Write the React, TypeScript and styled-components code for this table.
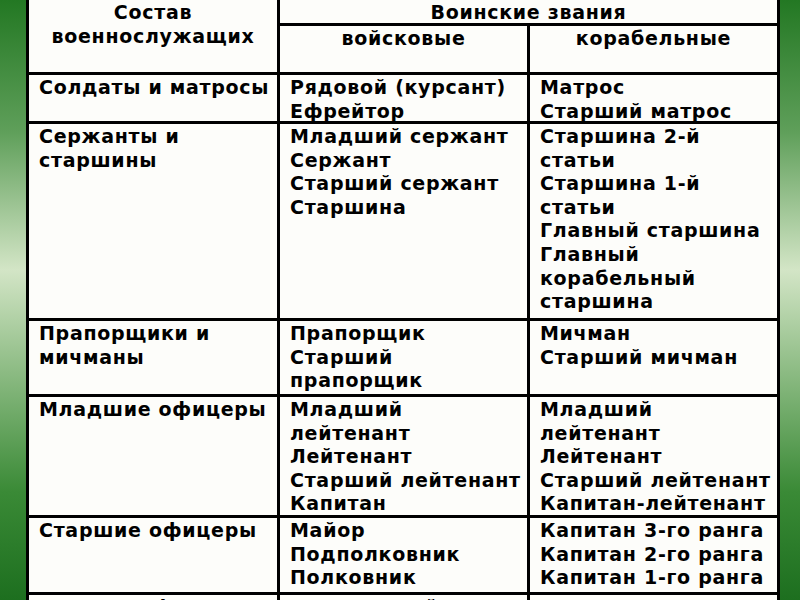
import React from 'react';
import styled, { createGlobalStyle } from 'styled-components';

const GlobalStyle = createGlobalStyle`
  html, body {
    margin: 0;
    padding: 0;
  }
  body {
    font-family: "DejaVu Sans", "Liberation Sans", sans-serif;
  }
`

const Page = styled.div`
  width: 800px;
  height: 600px;
  overflow: hidden;
  padding-left: 26px;
  box-sizing: border-box;
  background: linear-gradient(180deg, #237823 0%, #5f9f5a 22%, #d3e5c6 45%, #8cbb83 62%, #3a8a36 82%, #1d6f1f 100%);
`

const Grid = styled.div`
  display: grid;
  width: 754px;
  box-sizing: border-box;
  margin-top: -3px;
  padding: 3px;
  gap: 3px;
  background: #000;
  grid-template-columns: 248px 247px 247px;
  grid-template-rows: 23px 46px 46px 194px 73px 118px 74px 74px;
`

const Cell = styled.div<{ $center?: boolean; $span?: number; $rows?: number }>`
  background: #fdfdfa;
  color: #000;
  font-family: "DejaVu Sans", "Liberation Sans", sans-serif;
  font-weight: bold;
  font-size: 19px;
  line-height: 23.6px;
  letter-spacing: 0.7px;
  padding: 1px 0 0 10px;
  text-align: ${p => (p.$center ? 'center' : 'left')};
  ${p => (p.$center ? 'padding-left: 0;' : '')}
  grid-column: span ${p => p.$span || 1};
  grid-row: span ${p => p.$rows || 1};
  overflow: hidden;
`

const Line = styled.div`
  white-space: nowrap;
`

const rows: string[][][] = [
  [['Солдаты и матросы'], ['Рядовой (курсант)', 'Ефрейтор'], ['Матрос', 'Старший матрос']],
  [
    ['Сержанты и', 'старшины'],
    ['Младший сержант', 'Сержант', 'Старший сержант', 'Старшина'],
    ['Старшина 2-й', 'статьи', 'Старшина 1-й', 'статьи', 'Главный старшина', 'Главный', 'корабельный', 'старшина'],
  ],
  [['Прапорщики и', 'мичманы'], ['Прапорщик', 'Старший', 'прапорщик'], ['Мичман', 'Старший мичман']],
  [
    ['Младшие офицеры'],
    ['Младший', 'лейтенант', 'Лейтенант', 'Старший лейтенант', 'Капитан'],
    ['Младший', 'лейтенант', 'Лейтенант', 'Старший лейтенант', 'Капитан-лейтенант'],
  ],
  [
    ['Старшие офицеры'],
    ['Майор', 'Подполковник', 'Полковник'],
    ['Капитан 3-го ранга', 'Капитан 2-го ранга', 'Капитан 1-го ранга'],
  ],
  [['Высшие офицеры'], ['Генерал-майор', 'Генерал-лейтенант'], ['Контр-адмирал', 'Вице-адмирал']],
]

function App() {
  return (
    <Page>
      <GlobalStyle />
      <Grid>
        <Cell $center $rows={2}>
          <Line>Состав</Line>
          <Line>военнослужащих</Line>
        </Cell>
        <Cell $center $span={2}>Воинские звания</Cell>
        <Cell $center>войсковые</Cell>
        <Cell $center>корабельные</Cell>
        {rows.map((row, i) =>
          row.map((lines, j) => (
            <Cell key={i + '-' + j}>
              {lines.map((l, k) => <Line key={k}>{l}</Line>)}
            </Cell>
          ))
        )}
      </Grid>
    </Page>
  );
}

export default App;
